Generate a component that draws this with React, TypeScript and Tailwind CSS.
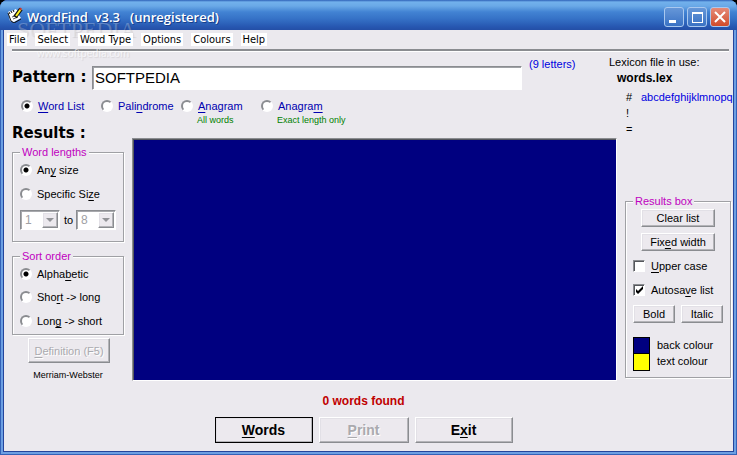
import React from "react";
import clsx from "clsx";

const raised =
  "border border-t-white border-l-white border-r-[#8a8c90] border-b-[#8a8c90] bg-[#ece9ee] shadow-[inset_-1px_-1px_0_#b4b4b8,inset_1px_1px_0_#e2e0e6]";
const sunken =
  "border border-t-[#8a8c90] border-l-[#8a8c90] border-r-white border-b-white";

// "&" goes before the letter that is the shortcut key
const Mnemonic = ({ text }: { text: string }) => {
  const at = text.indexOf("&");
  if (at < 0) return <>{text}</>;
  return (
    <>
      {text.slice(0, at)}
      <span className="underline underline-offset-2">{text[at + 1]}</span>
      {text.slice(at + 2)}
    </>
  );
};

interface RadioProps {
  name: string;
  text: string;
  checked?: boolean;
  className?: string;
}

const Radio = ({ name, text, checked, className }: RadioProps) => (
  <label className={clsx("flex h-3 items-center gap-[5px] whitespace-nowrap", className)}>
    <input
      type="radio"
      name={name}
      defaultChecked={checked}
      className="size-3 shrink-0 appearance-none rounded-full border-2 border-t-[#8a8c90] border-l-[#8a8c90] border-r-white border-b-white bg-white checked:bg-[radial-gradient(circle,#000_2px,#fff_3px)]"
    />
    <span>
      <Mnemonic text={text} />
    </span>
  </label>
);

const Check = ({ text, checked }: { text: string; checked?: boolean }) => (
  <label className="flex h-3 items-center gap-1.5 whitespace-nowrap">
    <span className="relative flex">
      <input
        type="checkbox"
        defaultChecked={checked}
        className={clsx("peer size-3 appearance-none bg-white shadow-[inset_1px_1px_0_#55575c]", sunken)}
      />
      <svg viewBox="0 0 12 12" className="pointer-events-none absolute inset-0 hidden size-3 peer-checked:block">
        <path d="M3 5v3l2 2 5-5V2L5 7z" fill="#000" />
      </svg>
    </span>
    <span>
      <Mnemonic text={text} />
    </span>
  </label>
);

const Group = ({ title, className, children }: { title: string; className?: string; children: React.ReactNode }) => (
  <fieldset
    className={clsx("border border-[#9fa0a4] shadow-[1px_1px_0_#fff,inset_1px_1px_0_#fff] px-[7px]", className)}
  >
    <legend className="h-3 bg-[#ebe9ee] px-0.5 leading-3 text-[#c000c0]">{title}</legend>
    {children}
  </fieldset>
);

const SizeSelect = ({ label, value }: { label: string; value: string }) => (
  <span className="relative flex">
    <select
      aria-label={label}
      disabled
      defaultValue={value}
      className={clsx("h-5 w-10 appearance-none bg-white pl-1 text-xs leading-4 text-[#a0a0a4] shadow-[inset_1px_1px_0_#a8a9ad]", sunken)}
    >
      <option>{value}</option>
    </select>
    <span
      className={clsx("pointer-events-none absolute top-0.5 right-0.5 flex h-4 w-4 items-center justify-center", raised)}
    >
      <svg viewBox="0 0 8 4" className="h-1 w-2">
        <path d="M0 0h8L4 4z" fill="#929397" />
      </svg>
    </span>
  </span>
);

interface PushProps {
  text: string;
  className?: string;
  disabled?: boolean;
}

const Push = ({ text, className, disabled }: PushProps) => (
  <button
    type="button"
    disabled={disabled}
    className={clsx(
      "flex items-center justify-center whitespace-nowrap",
      raised,
      disabled && "text-[#aaaaae] [text-shadow:1px_1px_0_#fff]",
      className
    )}
  >
    <span>
      <Mnemonic text={text} />
    </span>
  </button>
);

const menus = ["File", "Select", "Word Type", "Options", "Colours", "Help"];

const captionButton =
  "flex size-5 items-center justify-center rounded-[3px] border border-[#a9c8ef]";

const TitleBar = () => (
  <header className="flex h-[30px] items-center rounded-t-lg bg-[linear-gradient(#2f62b8_0px,#72b1ec_2px,#6aa9e7_6px,#4283d3_12px,#3571c6_19px,#2656b0_27px,#244fa6_30px)] px-[7px]">
    <svg viewBox="0 0 16 16" className="size-4">
      <path d="M1 5l2-1 1 1 1-2 2 1 1-2 2 1 1 4 3 4-7 4-4-1z" fill="#fff" />
      <path d="M1 6l3 8 3 2 7-4" fill="none" stroke="#111" strokeWidth="1" />
      <path d="M2 5l1 2M4 4l1 2M6 3l1 2" stroke="#111" strokeWidth="1" />
      <path d="M5 10l3-1M6 12l5-2" stroke="#555" strokeWidth="1" />
      <path d="M8 10l6-8" stroke="#111" strokeWidth="4" />
      <path d="M9 9l5-7" stroke="#fff120" strokeWidth="2" />
      <path d="M13 3l1-2" stroke="#c33" strokeWidth="2" />
    </svg>
    <h1 className="ml-1 pt-1 font-['Open_Sans',sans-serif] text-[13px] leading-5 font-semibold whitespace-pre text-white [text-shadow:1px_1px_0_#173f8c]">
      {"WordFind  v3.3   (unregistered)"}
    </h1>
    <div className="ml-auto flex gap-[3px] pt-[3px]">
      <button type="button" aria-label="Minimize" className={clsx(captionButton, "bg-linear-to-b from-[#6697d8] to-[#3a72c4]")}>
        <svg viewBox="0 0 18 18" className="size-[18px]">
          <path d="M4 12h7v3H4z" fill="#fff" />
        </svg>
      </button>
      <button type="button" aria-label="Maximize" className={clsx(captionButton, "bg-linear-to-b from-[#6697d8] to-[#3a72c4]")}>
        <svg viewBox="0 0 18 18" className="size-[18px]">
          <path d="M4 4h11v11H4zM5 6v8h9V6z" fill="#fff" fillRule="evenodd" />
        </svg>
      </button>
      <button type="button" aria-label="Close" className={clsx(captionButton, "bg-linear-to-b from-[#e58a78] to-[#d04a28]")}>
        <svg viewBox="0 0 18 18" className="size-[18px]">
          <path d="M4 4l10 10M14 4L4 14" stroke="#fff" strokeWidth="2" />
        </svg>
      </button>
    </div>
  </header>
);

const MenuBar = () => (
  <nav className="flex h-[19px] items-center gap-2 bg-[#ebe9ee] pl-[3px] font-['DejaVu_Sans_Condensed','DejaVu_Sans',sans-serif] text-[11px]">
    {menus.map((m) => (
      <button key={m} type="button" className="relative z-10 h-[13px] bg-white px-0.5 leading-[13px]">
        {m}
      </button>
    ))}
  </nav>
);

const Lexicon = () => (
  <section className="-ml-2 overflow-hidden">
    <p>Lexicon file in use:</p>
    <p className="mt-1 ml-2 text-xs leading-3 font-bold">words.lex</p>
    <dl className="mt-[7px] ml-[17px] grid grid-cols-[15px_1fr] gap-y-1">
      <dt>#</dt>
      <dd className="text-[#0000e0]">abcdefghijklmnopq</dd>
      <dt className="col-span-2">!</dt>
      <dt className="col-span-2">=</dt>
    </dl>
  </section>
);

const App = () => {
  return (
    <div className="bg-black">
      <div className="relative flex min-h-screen flex-col rounded-t-lg bg-[#6c9fe2] pb-[3px] font-['Liberation_Sans',Arial,sans-serif] text-[11px] leading-3 text-black shadow-[inset_1px_0_0_#3362b8,inset_-1px_-1px_0_#3362b8]">
        <TitleBar />
        <div className="mx-[3px] flex grow flex-col border-x border-b border-[#24459c] bg-[#ebe9ee]">
          <MenuBar />
          <hr className="mr-1 ml-2 h-[3px] border-t-2 border-b border-t-[#8a8c90] border-b-white" />

          <div className="flex">
            <main className="min-w-0 grow pt-[14px] pl-2">
              <div className="flex items-center">
                <label
                  htmlFor="pattern"
                  className="w-20 shrink-0 pb-0.5 font-['DejaVu_Sans',sans-serif] text-[15px] leading-5 font-bold whitespace-nowrap"
                >
                  Pattern :
                </label>
                <input
                  id="pattern"
                  type="text"
                  defaultValue="SOFTPEDIA"
                  className={clsx("h-6 min-w-0 grow bg-white px-0.5 pb-0.5 text-[15px] shadow-[inset_1px_1px_0_#a0a2a6]", sunken)}
                />
                <span className="-mt-2 ml-[7px] w-[88px] self-start text-[#0000e0]">(9 letters)</span>
              </div>

              <div className="mt-[10px] ml-[9px] flex text-[#0000b0]">
                <Radio name="mode" text="&Word List" checked className="w-20" />
                <Radio name="mode" text="Pali&ndrome" className="w-20" />
                <div className="w-20">
                  <Radio name="mode" text="&Anagram" />
                  <p className="ml-4 pt-0.5 text-[9px] text-[#008000]">All words</p>
                </div>
                <div>
                  <Radio name="mode" text="Anagra&m" />
                  <p className="ml-4 pt-0.5 text-[9px] text-[#008000]">Exact length only</p>
                </div>
              </div>

              <div className="flex gap-2">
                <div className="w-28 shrink-0">
                  <h2 className="font-['DejaVu_Sans',sans-serif] text-[15px] leading-[14px] font-bold">Results :</h2>
                  <Group title="Word lengths" className="mt-[6px] pb-[11px]">
                    <Radio name="length" text="An&y size" checked className="mt-[6px]" />
                    <Radio name="length" text="Specific Si&ze" className="mt-3" />
                    <div className="mt-[10px] flex items-center gap-1">
                      <SizeSelect label="Shortest" value="1" />
                      <span className="w-2">to</span>
                      <SizeSelect label="Longest" value="8" />
                    </div>
                  </Group>
                  <Group title="Sort order" className="mt-2 pb-[7px]">
                    <Radio name="sort" text="Alpha&betic" checked className="mt-[6px]" />
                    <Radio name="sort" text="Sho&rt -> long" className="mt-[11px]" />
                    <Radio name="sort" text="Lon&g -> short" className="mt-3" />
                  </Group>
                  <Push text="&Definition (F5)" disabled className="mt-[3px] ml-4 h-[25px] w-[82px]" />
                  <p className="mt-[6px] text-center text-[9px]">Merriam-Webster</p>
                </div>

                <div
                  role="log"
                  aria-label="Results"
                  className={clsx("mt-3 h-[243px] grow bg-[#000080] shadow-[inset_1px_1px_0_#55575c]", sunken)}
                />
              </div>
            </main>

            <aside className="w-[116px] shrink-0 pt-1">
              <Lexicon />
              <Group title="Results box" className="mt-[60px] mr-1 ml-2 pb-[6px]">
                <Push text="Clear list" className="mt-0.5 ml-2 h-[18px] w-[74px]" />
                <Push text="Fix&ed width" className="mt-1.5 ml-2 h-[18px] w-[74px]" />
                <div className="mt-[9px] flex flex-col gap-3">
                  <Check text="&Upper case" />
                  <Check text="Autosa&ve list" checked />
                </div>
                <div className="mt-[9px] flex gap-1.5">
                  <Push text="Bold" className="h-[18px] w-[42px]" />
                  <Push text="Italic" className="h-[18px] w-[42px]" />
                </div>
                <div className="mt-[14px] flex gap-[7px]">
                  <div className="w-[17px] divide-y divide-black border border-black">
                    <div className="h-4 bg-[#000080]" />
                    <div className="h-4 bg-[#ffff00]" />
                  </div>
                  <div className="leading-4">
                    <p>back colour</p>
                    <p>text colour</p>
                  </div>
                </div>
              </Group>
            </aside>
          </div>

          <footer className="flex flex-col items-center pt-3 pr-[10px] pb-[7px]">
            <p className="text-xs leading-4 font-bold text-[#c00000]">0 words found</p>
            <div className="mt-2 flex gap-[6px] text-sm font-bold">
              <Push text="&Words" className="h-[26px] w-[98px] outline-1 -outline-offset-1 outline-black" />
              <Push text="&Print" disabled className="h-[26px] w-[90px]" />
              <Push text="E&xit" className="h-[26px] w-[98px]" />
            </div>
          </footer>
        </div>

        <div
          aria-hidden="true"
          className="pointer-events-none absolute top-[18px] left-[17px] text-white/25 [text-shadow:1px_1px_1px_rgb(0_0_0/0.1)]"
        >
          <p className="font-['Liberation_Serif',serif] text-[22px] leading-6">SOFTPEDIA</p>
          <p className="mt-[5px] ml-5 font-['Open_Sans',sans-serif] text-[10px] text-white/70">www.softpedia.com</p>
        </div>
      </div>
    </div>
  );
};

export default App;
